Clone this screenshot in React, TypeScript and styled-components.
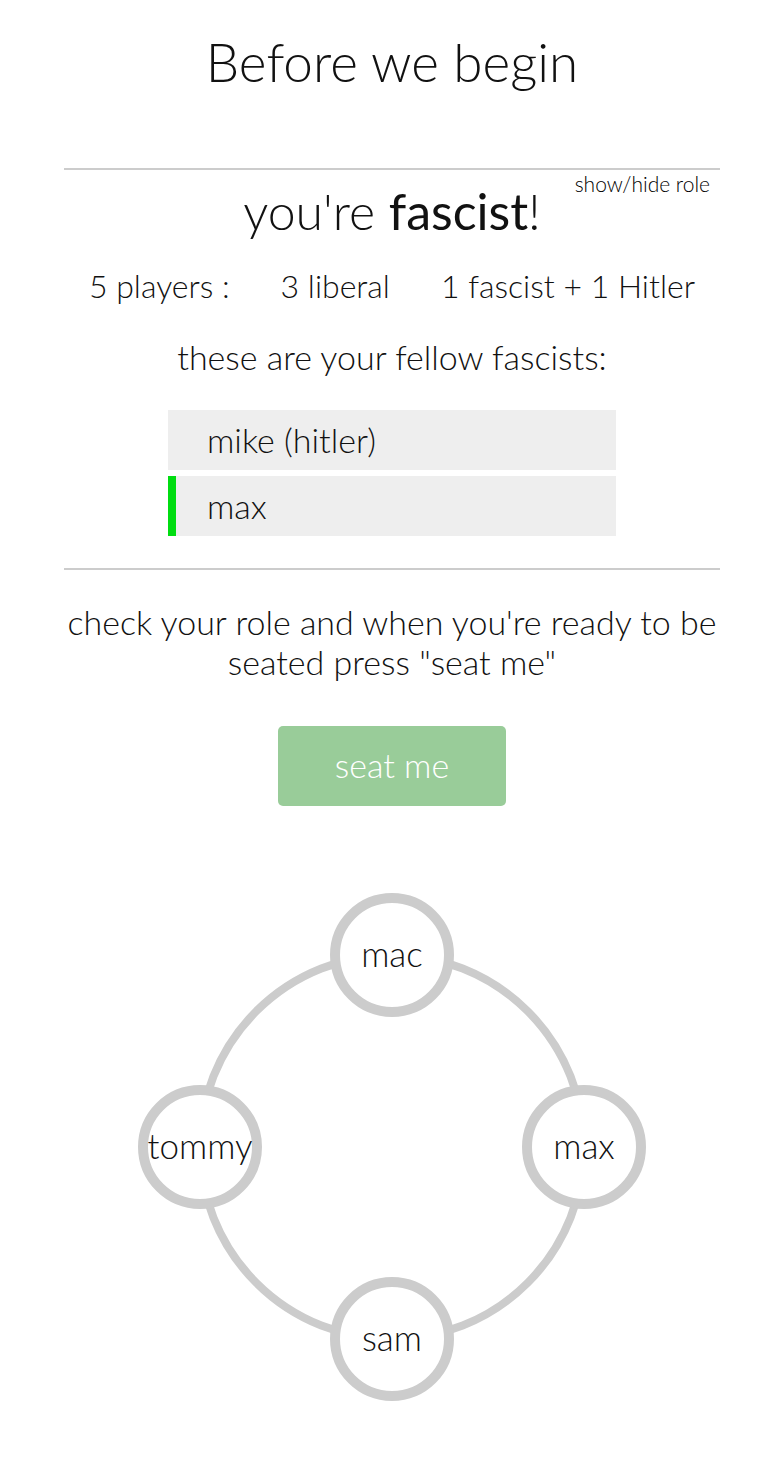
import React from "react";
import styled, { createGlobalStyle } from "styled-components";

const Global = createGlobalStyle`
  html, body { margin: 0; padding: 0; background: #fff; }
  body { font-family: "Lato", "Noto Sans", sans-serif; font-weight: 300; color: #111; }
`;

const Page = styled.div`
  width: 784px;
  display: flex;
  flex-direction: column;
  align-items: center;
`;

const Title = styled.h1`
  margin: 32px 0 0;
  font-size: 53px;
  line-height: 60px;
  font-weight: 300;
  text-align: center;
`;

const Rule = styled.hr<{ $top: number }>`
  width: 656px;
  margin: ${(p) => p.$top}px 0 0;
  border: none;
  border-top: 2px solid #ccc;
  height: 0;
`;

const RoleSection = styled.section`
  position: relative;
  width: 656px;
  display: flex;
  flex-direction: column;
  align-items: center;
`;

const Toggle = styled.span`
  position: absolute;
  top: 2px;
  right: 10px;
  font-size: 21px;
  line-height: 24px;
  color: #000;
  cursor: pointer;
`;

const RoleHeading = styled.h2`
  margin: 16px 0 0;
  font-size: 50px;
  line-height: 50px;
  font-weight: 300;
`;

const Strong = styled.span`
  font-weight: 400;
`;

const Stats = styled.div`
  margin-top: 30px;
  display: flex;
  gap: 51px;
  font-size: 32px;
  line-height: 40px;
`;

const Text = styled.p<{ $top: number }>`
  margin: ${(p) => p.$top}px 0 0;
  font-size: 34px;
  line-height: 40px;
  text-align: center;
`;

const List = styled.ul`
  list-style: none;
  margin: 33px 0 0;
  padding: 0;
  width: 448px;
  display: flex;
  flex-direction: column;
  gap: 6px;
`;

const Fellow = styled.li<{ $active?: boolean }>`
  height: 60px;
  box-sizing: border-box;
  display: flex;
  align-items: center;
  padding-left: ${(p) => (p.$active ? 31 : 39)}px;
  padding-bottom: 2px;
  background: #eee;
  border-left: ${(p) => (p.$active ? "8px solid #00dd11" : "none")};
  font-size: 34px;
`;

const SeatButton = styled.button`
  margin-top: 44px;
  width: 228px;
  height: 80px;
  padding: 0 0 4px;
  border: none;
  border-radius: 5px;
  background: #99cc99;
  color: #fff;
  font-family: inherit;
  font-weight: 300;
  font-size: 34px;
  cursor: pointer;
`;

const Table = styled.div`
  position: relative;
  margin-top: 87px;
  width: 508px;
  height: 508px;
  margin-bottom: 75px;
`;

const Ring = styled.div`
  position: absolute;
  left: 58px;
  top: 58px;
  width: 392px;
  height: 392px;
  box-sizing: border-box;
  border: 8px solid #ccc;
  border-radius: 50%;
`;

const Seat = styled.div`
  position: absolute;
  width: 124px;
  height: 124px;
  box-sizing: border-box;
  border: 10px solid #ccc;
  border-radius: 50%;
  background: #fff;
  display: flex;
  align-items: center;
  justify-content: center;
  padding-bottom: 4px;
  font-size: 35px;
  white-space: nowrap;
`;

const seats = [
  { name: "mac", x: 254, y: 62 },
  { name: "tommy", x: 62, y: 254 },
  { name: "max", x: 446, y: 254 },
  { name: "sam", x: 254, y: 446 },
];

export default function App() {
  return (
    <Page>
      <Global />
      <Title>Before we begin</Title>
      <Rule $top={76} />
      <RoleSection>
        <Toggle>show/hide role</Toggle>
        <RoleHeading>
          you're <Strong>fascist</Strong>!
        </RoleHeading>
        <Stats>
          <span>5 players :</span>
          <span>3 liberal</span>
          <span>1 fascist + 1 Hitler</span>
        </Stats>
        <Text $top={31}>these are your fellow fascists:</Text>
        <List>
          <Fellow>mike (hitler)</Fellow>
          <Fellow $active>max</Fellow>
        </List>
      </RoleSection>
      <Rule $top={32} />
      <Text $top={32}>
        check your role and when you're ready to be
        <br />
        seated press "seat me"
      </Text>
      <SeatButton>seat me</SeatButton>
      <Table>
        <Ring />
        {seats.map((s) => (
          <Seat key={s.name} style={{ left: s.x - 62, top: s.y - 62 }}>
            {s.name}
          </Seat>
        ))}
      </Table>
    </Page>
  );
}
